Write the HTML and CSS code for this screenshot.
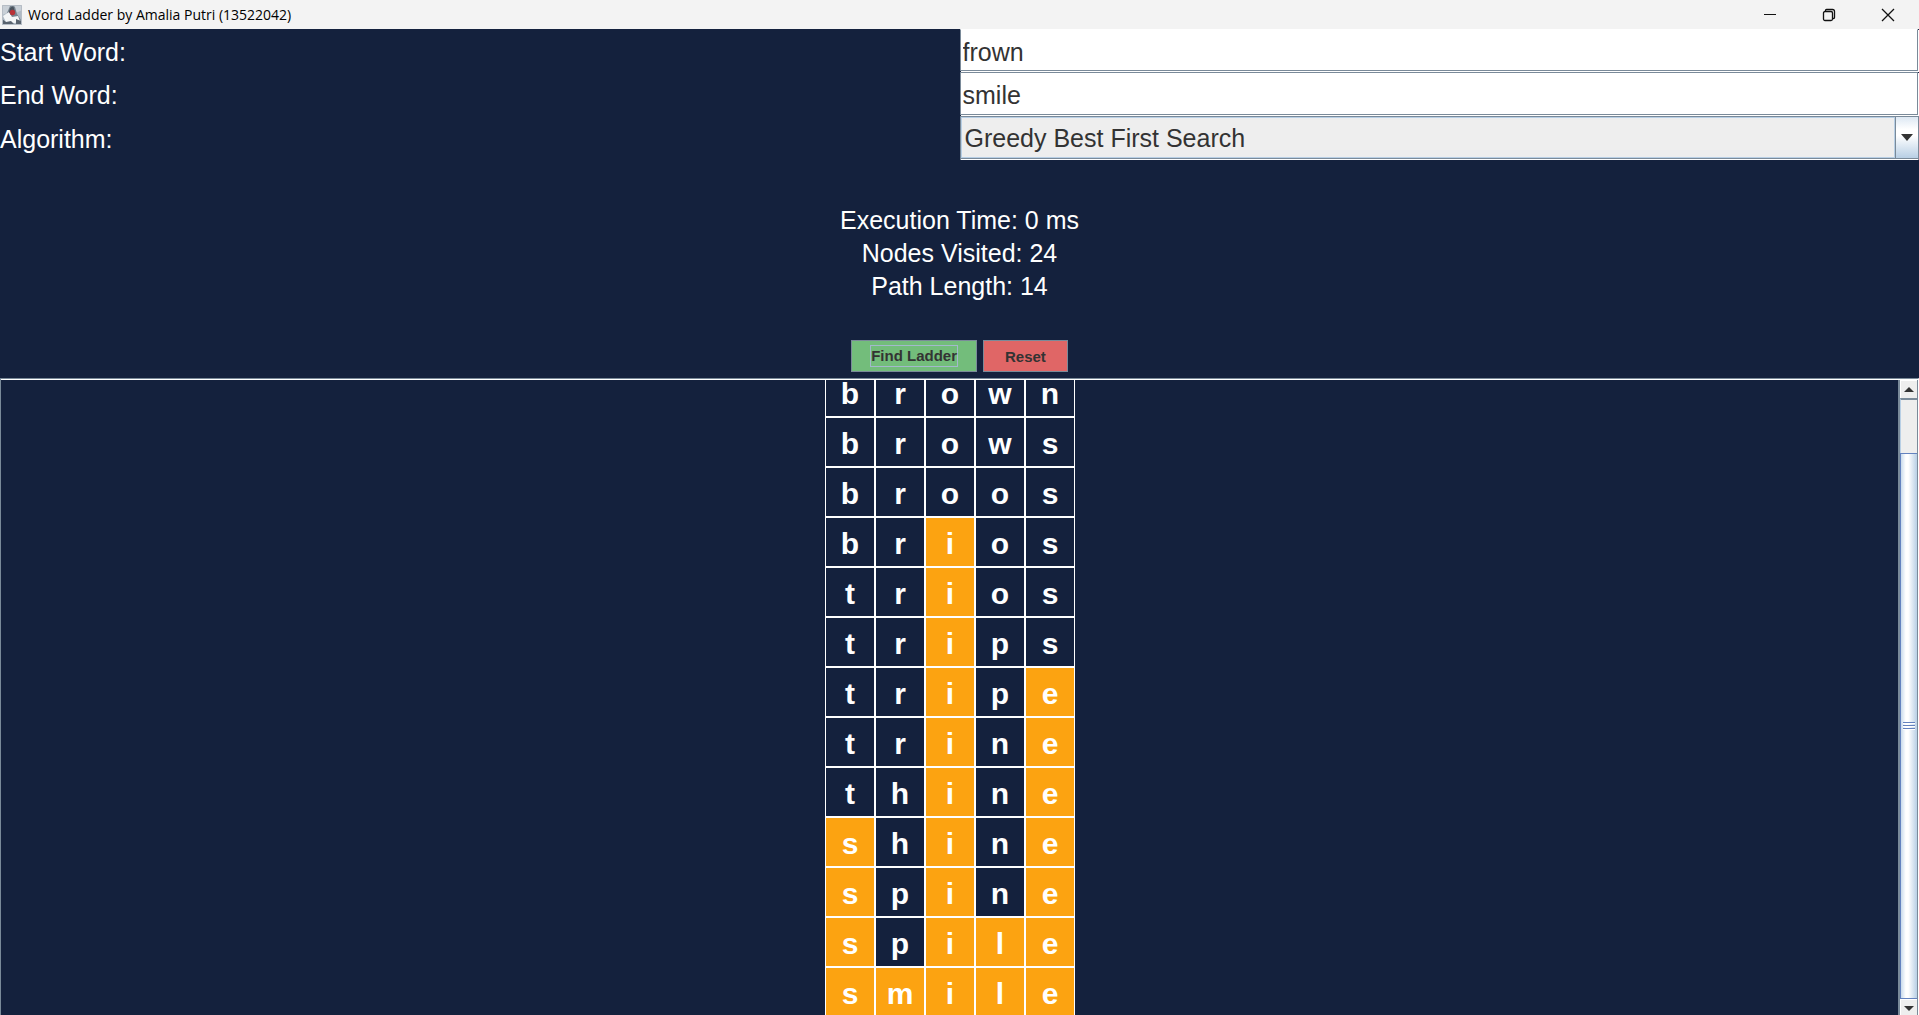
FILE: index.html
```html
<!DOCTYPE html>
<html lang="en">
<head>
<meta charset="utf-8">
<title>Word Ladder by Amalia Putri (13522042)</title>
<link rel="stylesheet" href="styles.css">
</head>
<body>
<div class="window">
  <header class="titlebar">
    <svg class="app-icon" width="20" height="20" viewBox="0 0 20 20" aria-hidden="true">
      <rect width="20" height="20" fill="#aeb9c4"/>
      <path d="M0 0h20v5l-6 3H5L0 10z" fill="#c9d0d7"/>
      <path d="M8 1q3-2 5 1l2 7 4 6-2 3-7-2-5-8z" fill="#77838e"/>
      <path d="M1 11l6-4 3 5 6-1 2 5-5 2-9-1z" fill="#f4f6f7"/>
      <path d="M8 3q3-3 4 0l1 5-4 2-2-3z" fill="#49535d"/>
      <circle cx="10.500" cy="7.500" r="2.700" fill="#b93238"/>
      <path d="M0 14l4 3 5-1 3 3H0zM14 14l5 2v3h-5z" fill="#59636e"/>
      <path d="M.5.5h19v19H.5z" fill="none" stroke="#b6bdc5"/>
    </svg>
    <h1 class="title">Word Ladder by Amalia Putri (13522042)</h1>
    <div class="window-controls">
      <button class="window-button" aria-label="Minimize"><svg width="14" height="14" viewBox="0 0 14 14"><path d="M1 6.500h12" stroke="#111" fill="none"/></svg></button>
      <button class="window-button" aria-label="Restore"><svg width="14" height="14" viewBox="0 0 14 14"><path d="M3.500 3V2.500q0-1 1-1h6q2 0 2 2v6q0 1-1 1H11" stroke="#111" fill="none" stroke-width="1.300"/><rect x="1.500" y="3.500" width="9" height="9" rx="1.500" stroke="#111" fill="none" stroke-width="1.300"/></svg></button>
      <button class="window-button" aria-label="Close"><svg width="14" height="14" viewBox="0 0 14 14"><path d="M1 1l12 12M13 1L1 13" stroke="#111" fill="none" stroke-width="1.300"/></svg></button>
    </div>
  </header>

  <form class="fields">
    <label for="start">Start Word:</label>
    <input class="text-field" id="start" type="text" value="frown">
    <label for="end">End Word:</label>
    <input class="text-field" id="end" type="text" value="smile">
    <label for="algorithm">Algorithm:</label>
    <div class="combo">
      <select id="algorithm">
        <option>Greedy Best First Search</option>
      </select>
      <span class="combo-arrow"><svg width="12" height="7" viewBox="0 0 12 7"><path d="M0 0h12L6 7z" fill="#333"/></svg></span>
    </div>
  </form>

  <section class="results">
    <p>Execution Time: 0 ms</p>
    <p>Nodes Visited: 24</p>
    <p>Path Length: 14</p>
  </section>

  <div class="actions">
    <button class="action find"><span class="focus-ring">Find Ladder</span></button>
    <button class="action reset">Reset</button>
  </div>

  <main class="scroll-pane">
    <div class="viewport">
      <table class="ladder">
        <tr><td>b</td><td>r</td><td>o</td><td>w</td><td>n</td></tr>
        <tr><td>b</td><td>r</td><td>o</td><td>w</td><td>s</td></tr>
        <tr><td>b</td><td>r</td><td>o</td><td>o</td><td>s</td></tr>
        <tr><td>b</td><td>r</td><td class="hit">i</td><td>o</td><td>s</td></tr>
        <tr><td>t</td><td>r</td><td class="hit">i</td><td>o</td><td>s</td></tr>
        <tr><td>t</td><td>r</td><td class="hit">i</td><td>p</td><td>s</td></tr>
        <tr><td>t</td><td>r</td><td class="hit">i</td><td>p</td><td class="hit">e</td></tr>
        <tr><td>t</td><td>r</td><td class="hit">i</td><td>n</td><td class="hit">e</td></tr>
        <tr><td>t</td><td>h</td><td class="hit">i</td><td>n</td><td class="hit">e</td></tr>
        <tr><td class="hit">s</td><td>h</td><td class="hit">i</td><td>n</td><td class="hit">e</td></tr>
        <tr><td class="hit">s</td><td>p</td><td class="hit">i</td><td>n</td><td class="hit">e</td></tr>
        <tr><td class="hit">s</td><td>p</td><td class="hit">i</td><td class="hit">l</td><td class="hit">e</td></tr>
        <tr><td class="hit">s</td><td class="hit">m</td><td class="hit">i</td><td class="hit">l</td><td class="hit">e</td></tr>
      </table>
    </div>
    <div class="scrollbar">
      <button class="scroll-button" aria-label="Scroll up"><svg width="10" height="5" viewBox="0 0 10 5"><path d="M5 0l5 5H0z" fill="#333"/></svg></button>
      <div class="track"></div>
      <div class="thumb"><svg width="12" height="8" viewBox="0 0 12 8"><path d="M0 1.500h12M0 4.500h12M0 7.500h12" stroke="#fff"/><path d="M0 .5h12M0 3.500h12M0 6.500h12" stroke="#6382bf"/></svg></div>
      <button class="scroll-button" aria-label="Scroll down"><svg width="10" height="5" viewBox="0 0 10 5"><path d="M0 0h10L5 5z" fill="#333"/></svg></button>
    </div>
  </main>
</div>
</body>
</html>
```
FILE: styles.css
```css
* {
  box-sizing: border-box;
}

body {
  margin: 0;
  height: 100vh;
  overflow: hidden;
  background: #14213d;
  font-family: "Liberation Sans", Arial, sans-serif;
}

button,
input,
select {
  font-family: inherit;
}

/* The frame reaches slightly below the screen edge, like a maximized window. */
.window {
  display: flex;
  flex-direction: column;
  height: calc(100vh + 3px);
}

.titlebar {
  display: flex;
  align-items: center;
  flex: none;
  height: 29px;
  padding: 0 2px;
  background: #f3f3f3;
}

.title {
  margin: 0 0 0 6px;
  font: 14px/20px "Open Sans", "Segoe UI", sans-serif;
  color: #000;
}

.window-controls {
  display: flex;
  align-self: stretch;
  margin-left: auto;
}

.window-button {
  display: flex;
  align-items: center;
  justify-content: center;
  width: 59px;
  padding: 0;
  border: 0;
  background: none;
}

.fields {
  display: grid;
  grid-template-columns: 1fr 1fr;
  grid-template-rows: 43px 44px 44px;
  flex: none;
  font-size: 25px;
  color: #fff;
}

.fields label {
  align-self: center;
  padding-top: 2px;
  line-height: 30px;
}

.text-field {
  width: calc(100% - 1px);
  height: calc(100% - 1px);
  padding: 4px 2px 0;
  border: 1px solid #7a8a99;
  border-radius: 0;
  outline: 0;
  background: #fff;
  box-shadow: 1px 1px 0 #fff;
  color: #333;
  font-size: 25px;
}

#start {
  border-top-color: #fff;
}

.combo {
  display: flex;
  border: 1px solid #7a8a99;
  border-bottom: 0;
  background: #eee;
  box-shadow: inset 0 -1px 0 #fff, inset 0 -2px 0 #7a8a99;
}

.combo select {
  flex: 1;
  margin-bottom: 2px;
  padding: 0 3px;
  appearance: none;
  border: 1px solid #b8cfe5;
  border-radius: 0;
  background: #eee;
  color: #333;
  font-size: 25px;
}

.combo-arrow {
  display: flex;
  align-items: center;
  justify-content: center;
  width: 23px;
  margin-bottom: 2px;
  border-left: 1px solid #7a8a99;
  background: linear-gradient(#dde8f3, #fff 30%, #fff 45%, #b8cfe5);
}

.results {
  flex: none;
  padding: 44px 0 37px;
  text-align: center;
  color: #fff;
  font-size: 25px;
  line-height: 33px;
}

.results p {
  margin: 0;
}

.actions {
  display: flex;
  justify-content: center;
  gap: 6px;
  flex: none;
  padding-bottom: 6px;
}

.action {
  height: 32px;
  padding: 0 21px;
  border: 1px solid #7a8a99;
  border-radius: 0;
  color: #333;
  font-size: 15px;
  font-weight: bold;
}

.find {
  padding: 0 18px;
  background: #73bd7b;
}

.reset {
  background: #e06666;
}

.focus-ring {
  display: block;
  border: 1px solid #a3b8cc;
  line-height: 20px;
}

.scroll-pane {
  display: flex;
  flex: 1;
  min-height: 0;
  border: 1px solid #7a8a99;
  border-right-color: #fff;
  box-shadow: inset 0 1px 0 #fff;
}

.viewport {
  display: flex;
  flex: 1;
  flex-direction: column;
  align-items: center;
  justify-content: flex-end;
  min-height: 0;
  margin-top: 1px;
  overflow: hidden;
}

.ladder {
  border-spacing: 0;
  flex: none;
}

.ladder td {
  width: 50px;
  height: 50px;
  padding: 4px 0 0;
  border: 1px solid #fff;
  background: #14213d;
  color: #fff;
  font-size: 30px;
  font-weight: bold;
  line-height: 34px;
  text-align: center;
}

.ladder .hit {
  background: #fca311;
}

.scrollbar {
  display: flex;
  flex-direction: column;
  width: 20px;
  margin: 1px 0 0 -1px;
  border-left: 2px solid #7a8a99;
  border-right: 1px solid #7a8a99;
  background: #eee;
}

.scroll-button {
  display: flex;
  align-items: center;
  justify-content: center;
  height: 18px;
  padding: 0;
  border: 1px solid #fff;
  border-width: 1px 0 0 1px;
  background: #eee;
}

.track {
  flex: 53;
  border-top: 2px solid #7a8a99;
  border-left: 1px solid #b8cfe5;
}

.thumb {
  display: flex;
  align-items: center;
  justify-content: center;
  flex: 546;
  border: 1px solid #6382bf;
  border-right: 0;
  background: linear-gradient(90deg, #c8daec, #fff 30%, #fff 45%, #b8cfe5);
}
```
